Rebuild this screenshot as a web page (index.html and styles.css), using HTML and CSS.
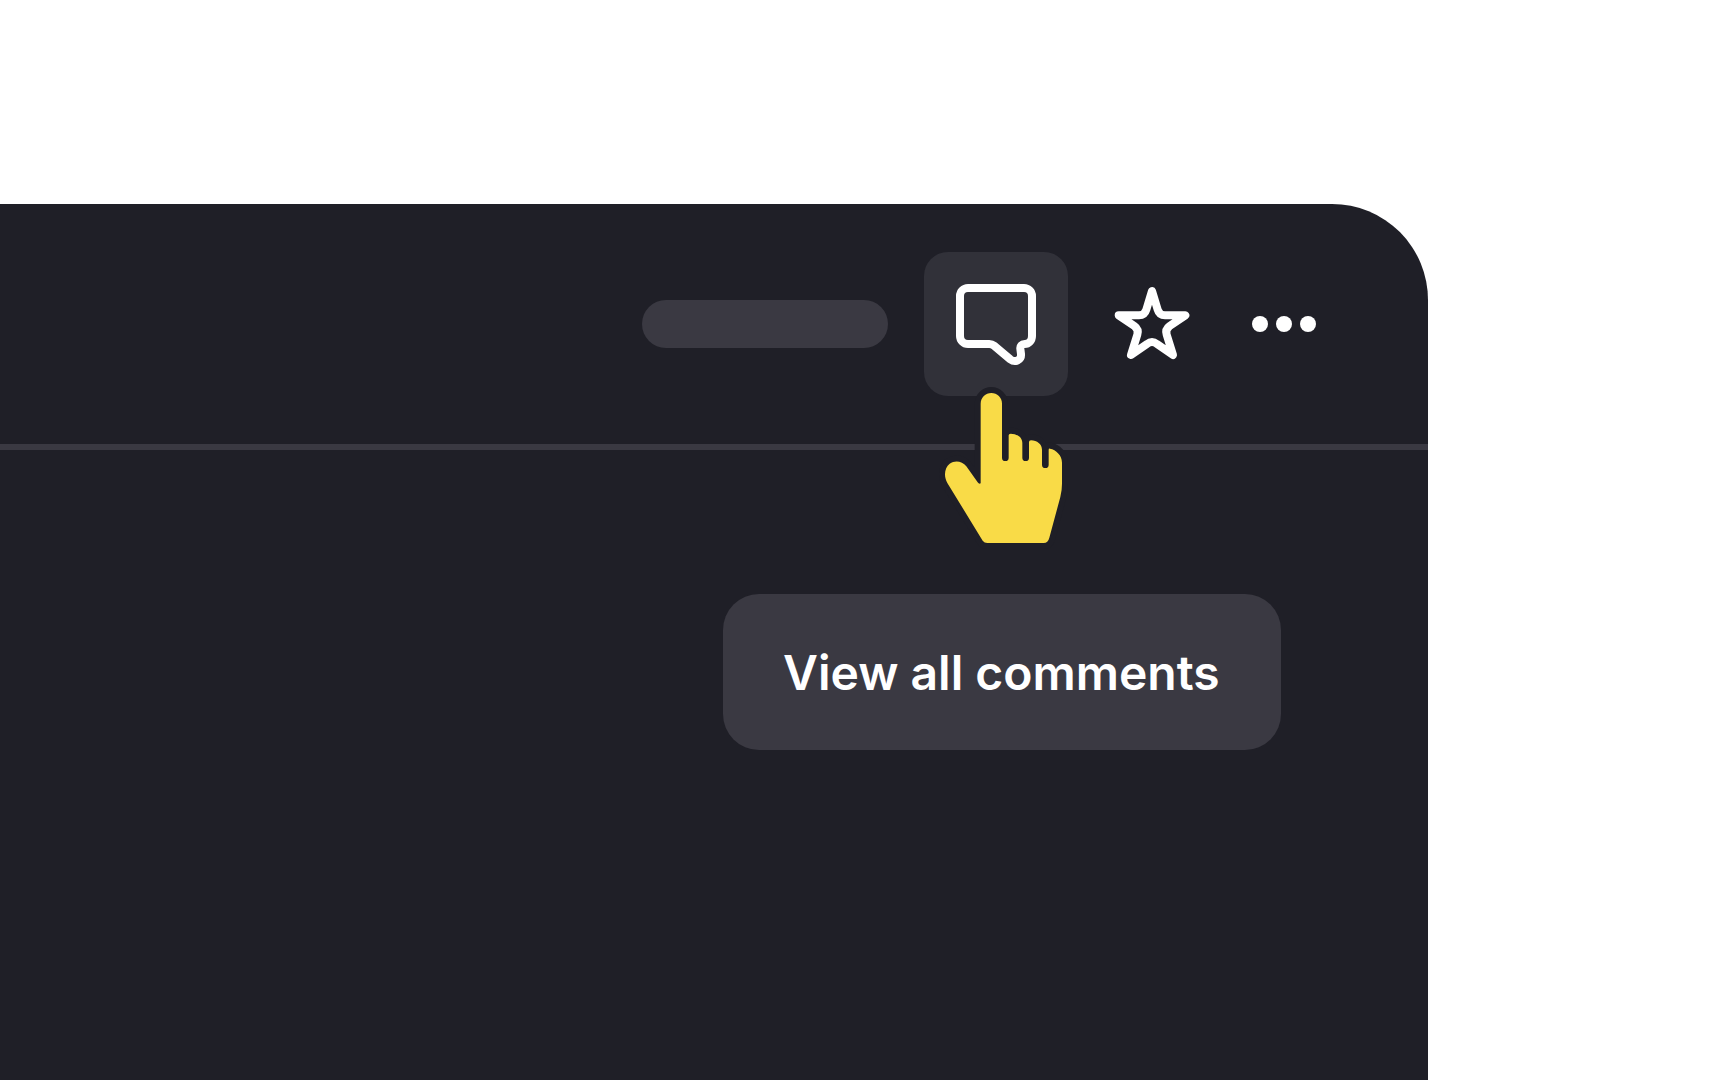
FILE: index.html
```html
<!DOCTYPE html>
<html lang="en">
<head>
  <meta charset="utf-8">
  <title>View all comments</title>
  <link rel="stylesheet" href="styles.css">
</head>
<body>
  <div class="window">
    <header class="toolbar">
      <span class="placeholder"></span>
      <button class="tool tool-active" type="button" aria-label="Comments" aria-describedby="comments-tip">
        <svg class="icon" viewBox="42 36 432 432" aria-hidden="true">
          <path d="M174 144H342a24 24 0 0 1 24 24V288c0 14-10 24-22 24-9 0-14 6-13 14l2 16c2 19-18 27-32 16L252 317q-6-5-14-5H174a24 24 0 0 1-24-24V168a24 24 0 0 1 24-24Z"/>
        </svg>
        <svg class="pointer" viewBox="0 0 450 510" aria-hidden="true">
          <path d="M152 71a32 32 0 0 1 64 0V233a10 10 0 0 0 20 0V166q0-5 6-5c20 0 35 12 35 28V233a10 10 0 0 0 20 0V186q0-5 6-5c18 0 33 12 33 28V254a10 10 0 0 0 20 0V209q0-4 4-3c18 3 36 20 36 42V311q0 20-5 40L358 473q-4 16-17 16H172q-9 0-14-7L52 309C40 288 44 263 59 251C76 239 97 244 109 259L143 307q4 6 9 3Z"/>
        </svg>
      </button>
      <button class="tool" type="button" aria-label="Favorite">
        <svg class="icon" viewBox="-30 -24 432 432" aria-hidden="true">
          <path d="M186 93L169 149Q164 166 147 166H86L133 198Q147 208 142 224L123 285L171 252Q186 240 201 252L249 285L230 224Q225 208 239 198L286 166H225Q208 166 203 149Z"/>
        </svg>
      </button>
      <button class="tool tool-narrow" type="button" aria-label="More">
        <svg class="icon icon-solid" viewBox="0 0 144 144" aria-hidden="true">
          <circle cx="48" cy="72" r="8"/>
          <circle cx="72" cy="72" r="8"/>
          <circle cx="96" cy="72" r="8"/>
        </svg>
      </button>
    </header>
    <main class="content">
      <div class="tooltip" id="comments-tip" role="tooltip">View all comments</div>
    </main>
  </div>
</body>
</html>
```
FILE: styles.css
```css
:root {
  --surface: #1f1f27;
  --raised: #3a3942;
  --hover: #313139;
}

* {
  box-sizing: border-box;
}

body {
  margin: 0;
  display: flex;
  flex-direction: column;
  min-height: 100vh;
  padding: 204px 300px 0 0;
  background: #fff;
  font-family: Inter, "Liberation Sans", sans-serif;
}

.window {
  flex: 1;
  background: var(--surface);
  border-top-right-radius: 96px;
}

.toolbar {
  display: flex;
  align-items: center;
  justify-content: flex-end;
  padding: 48px 84px 48px 0;
  border-bottom: 6px solid var(--raised);
}

.placeholder {
  width: 246px;
  height: 48px;
  margin-right: 36px;
  border-radius: 24px;
  background: var(--raised);
}

.tool {
  position: relative;
  display: flex;
  justify-content: center;
  width: 144px;
  height: 144px;
  padding: 0;
  border: 0;
  border-radius: 24px;
  background: none;
  color: #fff;
}

.tool-active {
  margin-right: 12px;
  background: var(--hover);
}

.tool-narrow {
  width: 120px;
}

.icon {
  flex: none;
  width: 144px;
  height: 144px;
  fill: none;
  stroke: currentColor;
  stroke-width: 24;
  stroke-linejoin: round;
}

.icon-solid {
  fill: currentColor;
  stroke: none;
}

/* Hand cursor lying over the button, with a surface-coloured halo */
.pointer {
  position: absolute;
  top: 128px;
  left: 6px;
  width: 150px;
  height: 170px;
  overflow: visible;
  fill: #f9db47;
  stroke: var(--surface);
  stroke-width: 36;
  stroke-linejoin: round;
  paint-order: stroke;
}

.content {
  display: flex;
  justify-content: flex-end;
  padding: 144px 147px 48px 0;
}

.tooltip {
  min-width: 558px;
  padding: 50px 60px 48px;
  border-radius: 36px;
  background: var(--raised);
  color: #fff;
  font-size: 48px;
  font-weight: 600;
  line-height: 58px;
  white-space: nowrap;
}
```
